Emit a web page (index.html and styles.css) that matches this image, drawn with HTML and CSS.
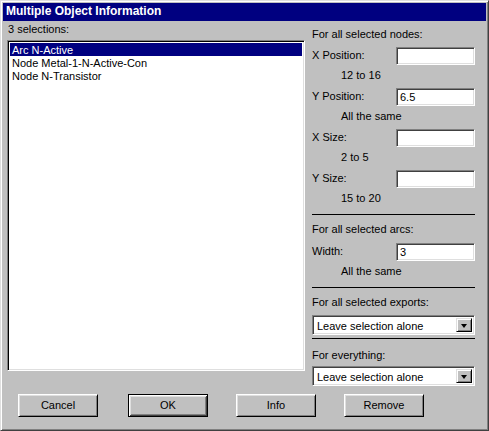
FILE: index.html
```html
<!DOCTYPE html>
<html>
<head>
<meta charset="utf-8">
<title>Multiple Object Information</title>
<link rel="stylesheet" href="styles.css">
</head>
<body>
<div class="window">
  <div class="titlebar"><span class="title">Multiple Object Information</span></div>
  <div class="content">
    <div class="left">
      <div class="sel-label">3 selections:</div>
      <div class="listbox">
        <div class="item selected">Arc N-Active</div>
        <div class="item">Node Metal-1-N-Active-Con</div>
        <div class="item">Node N-Transistor</div>
      </div>
    </div>
    <div class="panel">
      <div class="heading">For all selected nodes:</div>
      <div class="row first"><span class="lbl">X Position:</span><div class="field"></div></div>
      <div class="value">12 to 16</div>
      <div class="row"><span class="lbl">Y Position:</span><div class="field">6.5</div></div>
      <div class="value">All the same</div>
      <div class="row"><span class="lbl">X Size:</span><div class="field"></div></div>
      <div class="value">2 to 5</div>
      <div class="row"><span class="lbl">Y Size:</span><div class="field"></div></div>
      <div class="value">15 to 20</div>
      <div class="sep sep-nodes"></div>
      <div class="heading h-arcs">For all selected arcs:</div>
      <div class="row r-width"><span class="lbl">Width:</span><div class="field">3</div></div>
      <div class="value">All the same</div>
      <div class="sep sep-arcs"></div>
      <div class="heading h-exports">For all selected exports:</div>
      <div class="combo c-exports"><span class="combo-text">Leave selection alone</span><span class="drop"><span class="arrow"></span></span></div>
      <div class="sep sep-exports"></div>
      <div class="heading h-every">For everything:</div>
      <div class="combo c-every"><span class="combo-text">Leave selection alone</span><span class="drop"><span class="arrow"></span></span></div>
    </div>
  </div>
  <div class="buttons">
    <div class="btn btn-cancel">Cancel</div>
    <div class="btn btn-default">OK</div>
    <div class="btn">Info</div>
    <div class="btn">Remove</div>
  </div>
</div>
</body>
</html>
```
FILE: styles.css
```css
html, body {
  margin: 0;
  padding: 0;
  background: #c0c0c0;
}

body {
  font-family: "Liberation Sans", Arial, sans-serif;
  font-size: 11px;
  color: #000;
}

.window {
  width: 489px;
  height: 431px;
  box-sizing: border-box;
  background: #c0c0c0;
  border: 1px solid;
  border-color: #dfdfdf #404040 #404040 #dfdfdf;
  box-shadow: inset 1px 1px 0 #ffffff, inset -1px -1px 0 #808080;
  padding: 2px;
}

.titlebar {
  height: 18px;
  background: #000080;
  color: #fff;
  font-weight: bold;
  font-size: 12px;
  line-height: 17px;
  padding-left: 3px;
}

.content {
  display: grid;
  grid-template-columns: 298px 163px;
  column-gap: 7px;
  padding-left: 4px;
  height: 366px;
}

.left {
  display: flex;
  flex-direction: column;
}

.sel-label {
  margin-top: 2px;
  padding-left: 1px;
  line-height: 13px;
}

.listbox {
  margin-top: 4px;
  height: 331px;
  box-sizing: border-box;
  background: #fff;
  border: 1px solid;
  border-color: #808080 #ffffff #ffffff #808080;
  box-shadow: inset 1px 1px 0 #000000, inset -1px -1px 0 #dfdfdf;
  padding: 2px 2px 2px 2px;
}

.item {
  height: 13px;
  line-height: 15px;
  padding-left: 2px;
  white-space: nowrap;
}

.item.selected {
  background: #000080;
  color: #fff;
}

.panel {
  display: flex;
  flex-direction: column;
  padding-top: 7px;
}

.heading {
  line-height: 13px;
}

.row {
  display: flex;
  justify-content: space-between;
  align-items: flex-start;
  margin-top: 6px;
}

.lbl {
  line-height: 13px;
  padding-top: 2px;
}

.field {
  width: 79px;
  height: 18px;
  box-sizing: border-box;
  background: #fff;
  border: 1px solid;
  border-color: #808080 #ffffff #ffffff #808080;
  box-shadow: inset 1px 1px 0 #404040, inset -1px -1px 0 #dfdfdf;
  padding-left: 3px;
  line-height: 17px;
}

.value {
  margin-top: 4px;
  padding-left: 29px;
  line-height: 13px;
}

.sep {
  height: 1px;
  background: #000;
}

.sep-nodes { margin-top: 9px; }
.h-arcs { margin-top: 8px; }
.r-width { margin-top: 7px; }
.sep-arcs { margin-top: 9px; }
.h-exports { margin-top: 8px; }
.c-exports { margin-top: 6px; }
.sep-exports { margin-top: 3px; }
.h-every { margin-top: 10px; }
.c-every { margin-top: 4px; }

.combo {
  height: 20px;
  box-sizing: border-box;
  background: #fff;
  border: 1px solid;
  border-color: #808080 #ffffff #ffffff #808080;
  box-shadow: inset 1px 1px 0 #404040, inset -1px -1px 0 #dfdfdf;
  padding: 2px;
  display: flex;
  align-items: stretch;
}

.combo-text {
  flex: 1;
  padding-left: 2px;
  line-height: 17px;
  white-space: nowrap;
}

.drop {
  width: 16px;
  box-sizing: border-box;
  background: #c0c0c0;
  border: 1px solid;
  border-color: #dfdfdf #000000 #000000 #dfdfdf;
  box-shadow: inset 1px 1px 0 #ffffff, inset -1px -1px 0 #808080;
  display: flex;
  align-items: center;
  justify-content: center;
}

.arrow {
  width: 0;
  height: 0;
  border-left: 3.5px solid transparent;
  border-right: 3.5px solid transparent;
  border-top: 4px solid #000;
  margin-top: 1px;
}

.buttons {
  display: flex;
  gap: 28px;
  margin-top: 7px;
  padding-left: 15px;
}

.btn {
  width: 80px;
  height: 23px;
  box-sizing: border-box;
  border: 1px solid;
  border-color: #ffffff #000000 #000000 #ffffff;
  box-shadow: inset 1px 1px 0 #dfdfdf, inset -1px -1px 0 #808080;
  text-align: center;
  line-height: 21px;
  background: #c0c0c0;
}

.btn-cancel {
  margin-right: 2px;
}

.btn-default {
  border: 1px solid #000;
  box-shadow: inset 1px 1px 0 #ffffff, inset -1px -1px 0 #404040, inset 2px 2px 0 #dfdfdf, inset -2px -2px 0 #808080;
}
```
